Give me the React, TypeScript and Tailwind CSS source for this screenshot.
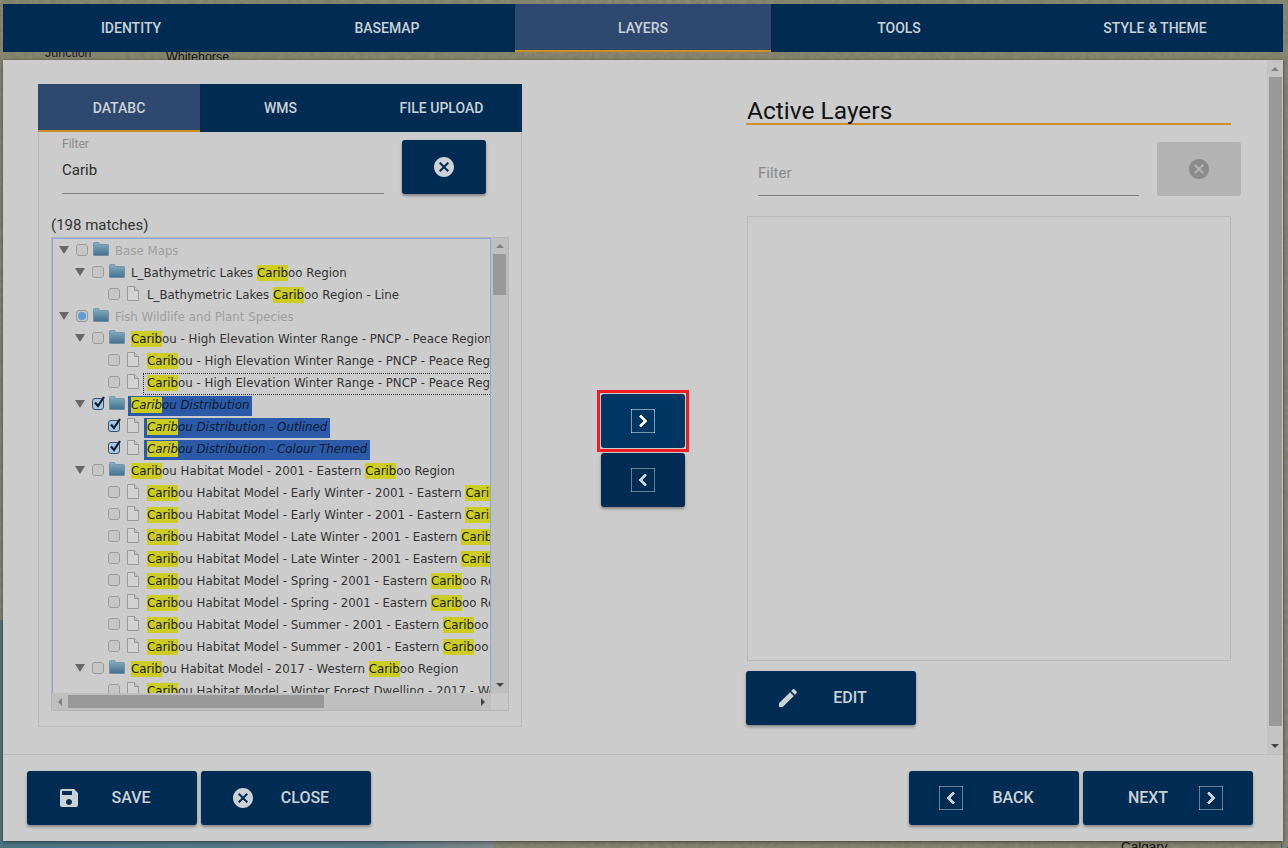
import { MdCancel, MdChevronLeft, MdChevronRight, MdEdit, MdSave } from 'react-icons/md'
import type { ReactNode } from 'react'

type Row = {
  level: number
  folder?: boolean
  text: string
  muted?: boolean
  check?: 'on' | 'half'
  selected?: boolean
  focused?: boolean
}

const rows: Row[] = [
  { level: 0, folder: true, text: 'Base Maps', muted: true },
  { level: 1, folder: true, text: 'L_Bathymetric Lakes Cariboo Region' },
  { level: 2, text: 'L_Bathymetric Lakes Cariboo Region - Line' },
  { level: 0, folder: true, text: 'Fish Wildlife and Plant Species', muted: true, check: 'half' },
  { level: 1, folder: true, text: 'Caribou - High Elevation Winter Range - PNCP - Peace Region' },
  { level: 2, text: 'Caribou - High Elevation Winter Range - PNCP - Peace Region - Outlined' },
  { level: 2, text: 'Caribou - High Elevation Winter Range - PNCP - Peace Region - Themed', focused: true },
  { level: 1, folder: true, text: 'Caribou Distribution', check: 'on', selected: true },
  { level: 2, text: 'Caribou Distribution - Outlined', check: 'on', selected: true },
  { level: 2, text: 'Caribou Distribution - Colour Themed', check: 'on', selected: true },
  { level: 1, folder: true, text: 'Caribou Habitat Model - 2001 - Eastern Cariboo Region' },
  { level: 2, text: 'Caribou Habitat Model - Early Winter - 2001 - Eastern Cariboo Region' },
  { level: 2, text: 'Caribou Habitat Model - Early Winter - 2001 - Eastern Cariboo Region' },
  { level: 2, text: 'Caribou Habitat Model - Late Winter - 2001 - Eastern Cariboo Region' },
  { level: 2, text: 'Caribou Habitat Model - Late Winter - 2001 - Eastern Cariboo Region' },
  { level: 2, text: 'Caribou Habitat Model - Spring - 2001 - Eastern Cariboo Region' },
  { level: 2, text: 'Caribou Habitat Model - Spring - 2001 - Eastern Cariboo Region' },
  { level: 2, text: 'Caribou Habitat Model - Summer - 2001 - Eastern Cariboo Region' },
  { level: 2, text: 'Caribou Habitat Model - Summer - 2001 - Eastern Cariboo Region' },
  { level: 1, folder: true, text: 'Caribou Habitat Model - 2017 - Western Cariboo Region' },
  { level: 2, text: 'Caribou Habitat Model - Winter Forest Dwelling - 2017 - Western Cariboo Region' },
]

function Highlighted({ text }: { text: string }) {
  const parts = text.split('Carib')
  return (
    <>
      {parts.map((part, i) => (
        <span key={i}>
          {i > 0 && <span className="bg-[#cccc22] py-[1px] text-[#1c1c00]">Carib</span>}
          {part}
        </span>
      ))}
    </>
  )
}

function Checkbox({ state }: { state?: 'on' | 'half' }) {
  return (
    <span
      className={`relative block h-[12px] w-[12px] rounded-[3px] border ${
        state === 'on'
          ? 'border-[#37506e] bg-[#a9c7de]'
          : state === 'half'
            ? 'border-[#9a9a9a] bg-[#c4c4c4]'
            : 'border-[#9c9c9c] bg-[#c6c6c6]'
      }`}
    >
      {state === 'half' && <span className="absolute left-[1px] top-[1px] h-[8px] w-[8px] rounded-full bg-[#5f9cd8]" />}
      {state === 'on' && (
        <svg className="absolute -top-[3px] left-[0px]" width="13" height="13" viewBox="0 0 13 13">
          <path d="M2 6.5 L5 10 L11 1" fill="none" stroke="#0c1a33" strokeWidth="2.2" />
        </svg>
      )}
    </span>
  )
}

function FolderIcon() {
  return (
    <svg width="16" height="14" viewBox="0 0 16 14" className="block">
      <defs>
        <linearGradient id="folderFill" x1="0" y1="0" x2="0" y2="1">
          <stop offset="0" stopColor="#86aec4" />
          <stop offset="1" stopColor="#44708f" />
        </linearGradient>
      </defs>
      <path d="M0.5 13 V1.5 Q0.5 0.5 1.5 0.5 H5.5 L7 2.5 H14.5 Q15.5 2.5 15.5 3.5 V13 Q15.5 13.5 15 13.5 H1 Q0.5 13.5 0.5 13 Z" fill="url(#folderFill)" stroke="#5b8199" strokeWidth="0.6" />
    </svg>
  )
}

function FileIcon() {
  return (
    <svg width="12" height="15" viewBox="0 0 12 15" className="block">
      <path d="M0.5 0.5 H7.5 L11.5 4.5 V14.5 H0.5 Z" fill="#d2d2d2" stroke="#9a9a9a" />
      <path d="M7.5 0.5 V4.5 H11.5" fill="#c0c0c0" stroke="#9a9a9a" />
    </svg>
  )
}

function TreeRow({ row }: { row: Row }) {
  const indent = row.level === 0 ? 'pl-[6px]' : row.level === 1 ? 'pl-[22px]' : 'pl-[38px]'
  return (
    <div className={`flex h-[22px] items-center whitespace-nowrap ${indent}`}>
      <span className="w-[17px] shrink-0">
        {row.folder && <span className="mt-[-5px] block h-0 w-0 border-x-[5px] border-t-[8px] border-x-transparent border-t-[#666666]" />}
      </span>
      <span className="mt-[-5px] w-[17px] shrink-0">
        <Checkbox state={row.check} />
      </span>
      {row.folder ? (
        <span className="mt-[-7px] w-[18px] shrink-0">
          <FolderIcon />
        </span>
      ) : (
        <span className="mt-[-6px] w-[18px] shrink-0 pl-[2px]">
          <FileIcon />
        </span>
      )}
      <span
        className={`flex h-[22px] items-center border px-[3px] font-['DejaVu_Sans',sans-serif] text-[11.8px] ${
          row.selected
            ? 'border-[#cccccc] bg-[#2b5ba8] italic text-[#0d1a33]'
            : row.focused
              ? 'border-dotted border-[#222222] text-[#333333]'
              : row.muted
                ? 'border-transparent text-[#9e9e9e]'
                : 'border-transparent text-[#333333]'
        }`}
      >
        <span>
          <Highlighted text={row.text} />
        </span>
      </span>
    </div>
  )
}

function NavTab({ label, active }: { label: string; active?: boolean }) {
  return (
    <div
      className={`flex h-[48px] w-[256px] items-center justify-center text-[14px] font-medium text-[#ccd1d6] ${
        active ? 'bg-[#2f4870] shadow-[inset_0_-2px_0_#cc8f22]' : ''
      }`}
    >
      {label}
    </div>
  )
}

function ActionButton({ icon, label, trailing }: { icon: ReactNode; label: string; trailing?: boolean }) {
  return (
    <button className="flex h-[54px] w-[170px] items-center rounded-[3px] bg-[#002c54] text-[16px] font-medium text-[#ccd1d6] shadow-[0_2px_3px_rgba(0,0,0,0.35)]">
      {trailing ? (
        <>
          <span className="ml-[35px] flex w-[60px] justify-center">{label}</span>
          <span className="flex w-[66px] justify-center">{icon}</span>
        </>
      ) : (
        <>
          <span className="ml-[10px] flex w-[64px] justify-center">{icon}</span>
          <span className="flex w-[60px] justify-center">{label}</span>
        </>
      )}
    </button>
  )
}

function IconButton({ children, className }: { children: ReactNode; className: string }) {
  return (
    <button className={`flex h-[54px] w-[84px] items-center justify-center rounded-[3px] ${className}`}>
      {children}
    </button>
  )
}

function Triangle({ dir }: { dir: 'up' | 'down' | 'left' | 'right' }) {
  if (dir === 'up') return <span className="block h-0 w-0 border-x-[4px] border-b-[4px] border-x-transparent border-b-[#808080]" />
  if (dir === 'down') return <span className="block h-0 w-0 border-x-[4px] border-t-[4px] border-x-transparent border-t-[#444444]" />
  if (dir === 'left') return <span className="block h-0 w-0 border-y-[4px] border-r-[4px] border-y-transparent border-r-[#808080]" />
  return <span className="block h-0 w-0 border-y-[4px] border-l-[4px] border-y-transparent border-l-[#444444]" />
}

function MapBackdrop() {
  return (
    <div className="absolute inset-0 overflow-hidden bg-[#80806a]">
      <svg className="absolute inset-0" width="1288" height="848">
        <filter id="terrain">
          <feTurbulence type="fractalNoise" baseFrequency="0.2" numOctaves="3" seed="4" />
          <feColorMatrix values="0 0 0 0 0.3  0 0 0 0 0.3  0 0 0 0 0.25  0.8 0 0 0 -0.25" />
        </filter>
        <rect width="1288" height="848" filter="url(#terrain)" />
        <defs>
          <linearGradient id="sea" x1="0" y1="0" x2="1" y2="0">
            <stop offset="0" stopColor="#4f7585" />
            <stop offset="0.75" stopColor="#5c7c88" />
            <stop offset="1" stopColor="#80888a" />
          </linearGradient>
        </defs>
        <rect x="0" y="620" width="3" height="228" fill="#55727f" />
        <rect x="0" y="841" width="495" height="7" fill="url(#sea)" />
      </svg>
      <span className="absolute left-[45px] top-[46px] font-['Liberation_Sans',sans-serif] text-[12.5px] leading-[14px] text-[#222222]">Junction</span>
      <span className="absolute left-[166px] top-[50px] font-['Liberation_Sans',sans-serif] text-[12.5px] leading-[14px] text-[#111111]">Whitehorse</span>
      <span className="absolute left-[1121px] top-[840px] font-['Liberation_Sans',sans-serif] text-[13.5px] leading-[14px] text-[#111111]">Calgary</span>
      <span className="absolute left-[1280px] top-[841px] font-['Liberation_Sans',sans-serif] text-[11px] leading-[14px] text-[#2b5a88]">Le</span>
    </div>
  )
}

export default function App() {
  return (
    <div className="relative h-[848px] w-[1288px] overflow-hidden font-['Roboto',sans-serif]">
      <MapBackdrop />

      <div className="relative pl-[3px] pt-[4px]">
        <div className="flex w-[1280px] bg-[#002c54]">
          <NavTab label="IDENTITY" />
          <NavTab label="BASEMAP" />
          <NavTab label="LAYERS" active />
          <NavTab label="TOOLS" />
          <NavTab label="STYLE &amp; THEME" />
        </div>

        <div className="mt-[8px] flex h-[781px] w-[1280px] flex-col bg-[#cccccc] shadow-[0_1px_4px_rgba(0,0,0,0.5)]">
          <div className="flex h-[694px]">
            {/* source tree */}
            <div className="ml-[35px] mt-[24px] w-[484px]">
              <div className="flex h-[48px] bg-[#002c54] text-[14px] font-medium text-[#ccd1d6]">
                <div className="flex w-[162px] items-center justify-center bg-[#2f4870] shadow-[inset_0_-2px_0_#cc8f22]">DATABC</div>
                <div className="flex flex-1 items-center justify-center">WMS</div>
                <div className="flex flex-1 items-center justify-center">FILE UPLOAD</div>
              </div>
              <div className="h-[595px] border border-t-0 border-[#b8b8b8] pl-[12px]">
                <div className="flex">
                  <div className="ml-[11px] h-[62px] w-[322px] border-b border-[#7f7f7f]">
                    <div className="pt-[5px] text-[12px] leading-[14px] text-[#8a8a8a]">Filter</div>
                    <div className="pt-[7px] text-[15px] leading-[24px] text-[#2b2b2b]">Carib</div>
                  </div>
                  <IconButton className="ml-[18px] mt-[8px] bg-[#002c54] text-[#ccd1d6] shadow-[0_2px_3px_rgba(0,0,0,0.35)]">
                    <MdCancel size={24} />
                  </IconButton>
                </div>
                <div className="mt-[21px] text-[15px] leading-[20px] text-[#333333]">(198 matches)</div>
                <div className="mt-[2px] flex h-[474px] w-[458px] flex-col border border-[#b5b5b5]">
                  <div className="flex min-h-0 flex-1">
                    <div className="w-[440px] overflow-hidden border-x border-t border-[#8ba9d6] pt-[2px]">
                      <div className="w-[700px]">
                        {rows.map((row, i) => (
                          <TreeRow key={i} row={row} />
                        ))}
                      </div>
                    </div>
                    <div className="flex w-[17px] flex-col items-center bg-[#bfbfbf]">
                      <div className="flex h-[16px] items-center">
                        <Triangle dir="up" />
                      </div>
                      <div className="h-[41px] w-[13px] bg-[#999999]" />
                      <div className="flex-1" />
                      <div className="flex h-[16px] items-center">
                        <Triangle dir="down" />
                      </div>
                    </div>
                  </div>
                  <div className="flex h-[17px]">
                    <div className="flex w-[440px] items-center bg-[#bfbfbf]">
                      <div className="flex w-[16px] justify-center">
                        <Triangle dir="left" />
                      </div>
                      <div className="h-[13px] w-[256px] bg-[#999999]" />
                      <div className="flex-1" />
                      <div className="flex w-[16px] justify-center">
                        <Triangle dir="right" />
                      </div>
                    </div>
                    <div className="w-[17px] bg-[#c8c8c8]" />
                  </div>
                </div>
              </div>
            </div>

            {/* add / remove */}
            <div className="ml-[76px] mt-[330px] flex w-[90px] flex-col items-center">
              <div className="border-[3px] border-[#ee1c25] p-[1px]">
                <IconButton className="h-[53px] bg-[#003662] text-white">
                  <MdChevronRight size={24} stroke="currentColor" strokeWidth={1} />
                </IconButton>
              </div>
              <IconButton className="mt-[1px] bg-[#002c54] text-[#ccd1d6] shadow-[0_2px_3px_rgba(0,0,0,0.35)]">
                <MdChevronLeft size={24} stroke="currentColor" strokeWidth={1} />
              </IconButton>
            </div>

            {/* active layers */}
            <div className="ml-[58px] w-[495px]">
              <div className="mt-[36px] h-[29px] w-[485px] border-b-2 border-[#cc8f22] pl-[1px] text-[24.5px] leading-[29px] text-[#111111]">Active Layers</div>
              <div className="mt-[17px] flex">
                <div className="ml-[12px] flex h-[54px] w-[381px] items-end border-b border-[#7f7f7f] pb-[12px] text-[15px] leading-[20px] text-[#8a8a8a]">Filter</div>
                <IconButton className="ml-[18px] bg-[#b3b3b3] text-[#8a8a8a]">
                  <MdCancel size={24} />
                </IconButton>
              </div>
              <div className="ml-[1px] mt-[20px] h-[445px] w-[484px] border border-[#b8b8b8]" />
              <div className="mt-[10px]">
                <ActionButton icon={<MdEdit size={24} />} label="EDIT" />
              </div>
            </div>

            {/* modal scrollbar */}
            <div className="ml-auto flex w-[16px] flex-col items-center bg-[#c4c4c4]">
              <div className="flex h-[17px] items-center">
                <Triangle dir="up" />
              </div>
              <div className="h-[649px] w-[13px] bg-[#999999]" />
              <div className="flex-1" />
              <div className="flex h-[17px] items-center">
                <Triangle dir="down" />
              </div>
            </div>
          </div>

          <div className="flex flex-1 items-start justify-between border-t border-[#bdbdbd] pl-[24px] pr-[30px] pt-[16px]">
            <div className="flex gap-[4px]">
              <ActionButton icon={<MdSave size={24} />} label="SAVE" />
              <ActionButton icon={<MdCancel size={24} />} label="CLOSE" />
            </div>
            <div className="flex gap-[4px]">
              <ActionButton icon={<MdChevronLeft size={24} stroke="currentColor" strokeWidth={1} />} label="BACK" />
              <ActionButton icon={<MdChevronRight size={24} stroke="currentColor" strokeWidth={1} />} label="NEXT" trailing />
            </div>
          </div>
        </div>
      </div>
    </div>
  )
}
